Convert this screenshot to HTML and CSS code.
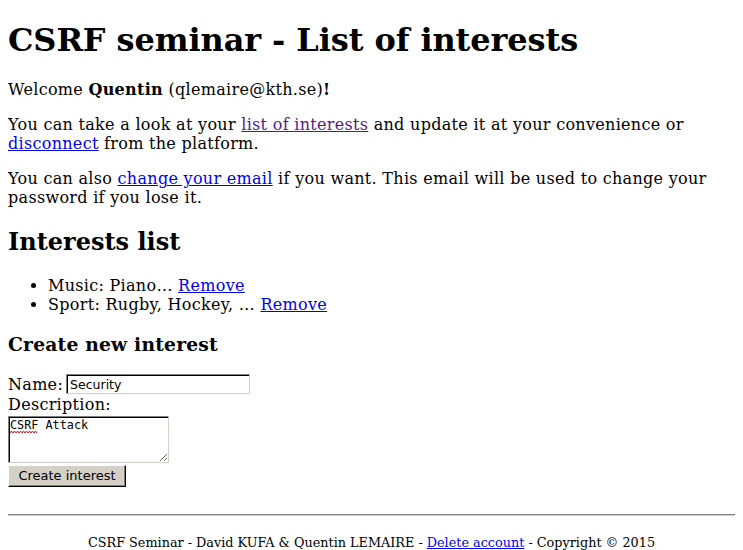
FILE: index.html
```html
<!DOCTYPE html>
<html>
<head>
<meta charset="utf-8">
<title>CSRF seminar</title>
<link rel="stylesheet" href="styles.css">
</head>
<body>
<h1 class="title">CSRF seminar - List of interests</h1>
<p>Welcome <strong>Quentin</strong> (qlemaire@kth.se)<strong>!</strong></p>
<p>You can take a look at your <a href="#" class="visited">list of interests</a> and update it at your convenience or <a href="#">disconnect</a> from the platform.</p>
<p>You can also <a href="#">change your email</a> if you want. This email will be used to change your password if you lose it.</p>
<h2 class="sub">Interests list</h2>
<ul class="list">
<li>Music: Piano… <a href="#">Remove</a></li>
<li>Sport: Rugby, Hockey, … <a href="#">Remove</a></li>
</ul>
<h3 class="subsub">Create new interest</h3>
<form class="form">
<div class="row-name"><label for="name">Name: </label><input id="name" type="text" class="name-input" value="Security" spellcheck="false"></div>
<div class="row-desc"><label for="desc">Description:</label></div>
<div class="ta-wrap"><textarea id="desc" class="desc-input" spellcheck="false">CSRF Attack</textarea><svg class="squiggle" width="28" height="4" viewBox="0 0 28 4"><path d="M0 3 L1.5 1 L3 3 L4.5 1 L6 3 L7.5 1 L9 3 L10.5 1 L12 3 L13.5 1 L15 3 L16.5 1 L18 3 L19.5 1 L21 3 L22.5 1 L24 3 L25.5 1 L27 3" fill="none" stroke="#e0140f" stroke-width="1"/></svg></div>
<button type="button" class="btn">Create interest</button>
</form>
<hr class="rule">
<footer class="footer">CSRF Seminar - David KUFA &amp; Quentin LEMAIRE - <a href="#">Delete account</a> - Copyright © 2015</footer>
</body>
</html>
```
FILE: styles.css
```css
body {
  font-family: "DejaVu Serif", serif;
  font-size: 16px;
  margin: 8px;
  color: #000;
  background: #fff;
  letter-spacing: 0.3px;
}
a { color: #0000ee; }
a.visited { color: #551a8b; }
.title {
  margin-top: 13px;
  letter-spacing: -0.1px;
}
.sub { letter-spacing: 0; }
.subsub { letter-spacing: 0.2px; }
.form { margin: 0; }
.row-name {
  height: 21px;
  display: flex;
  align-items: center;
}
.row-desc {
  height: 20px;
  line-height: 20px;
}
.name-input {
  font-family: "DejaVu Sans", sans-serif;
  font-size: 12.5px;
  letter-spacing: 0;
  box-sizing: border-box;
  width: 184px;
  height: 20px;
  margin: 0 0 0 3px;
  padding: 0 2px 0 3px;
  border: 1px solid;
  border-color: #808080 #d4d0c8 #d4d0c8 #808080;
  box-shadow: inset 1px 1px 0 #000;
  background: #fff;
  outline: none;
}
.ta-wrap {
  position: relative;
  width: 161px;
  margin-top: 1px;
}
.desc-input {
  display: block;
  font-family: "DejaVu Sans Mono", monospace;
  font-size: 11.8px;
  line-height: 14px;
  letter-spacing: 0;
  box-sizing: border-box;
  width: 161px;
  height: 47px;
  padding: 1px 2px 1px 1px;
  margin: 0;
  border: 1px solid;
  border-color: #808080 #d4d0c8 #d4d0c8 #808080;
  box-shadow: inset 1px 1px 0 #000;
  background: #fff;
  outline: none;
}
.squiggle {
  position: absolute;
  left: 2px;
  top: 14px;
}
.btn {
  display: block;
  font-family: "DejaVu Sans", sans-serif;
  font-size: 13px;
  letter-spacing: 0;
  box-sizing: border-box;
  width: 118px;
  height: 22px;
  background: #d4d0c8;
  border: 1px solid;
  border-color: #fff #000 #000 #fff;
  box-shadow: inset -1px -1px 0 #808080;
  padding: 0;
  margin-top: 2px;
  color: #000;
}
.rule {
  margin-top: 27px;
  border: 0;
  border-top: 1px solid #808080;
  border-bottom: 1px solid #d4d0c8;
}
.footer {
  text-align: center;
  font-size: 12.8px;
  letter-spacing: 0;
  margin-top: 19px;
}
```
